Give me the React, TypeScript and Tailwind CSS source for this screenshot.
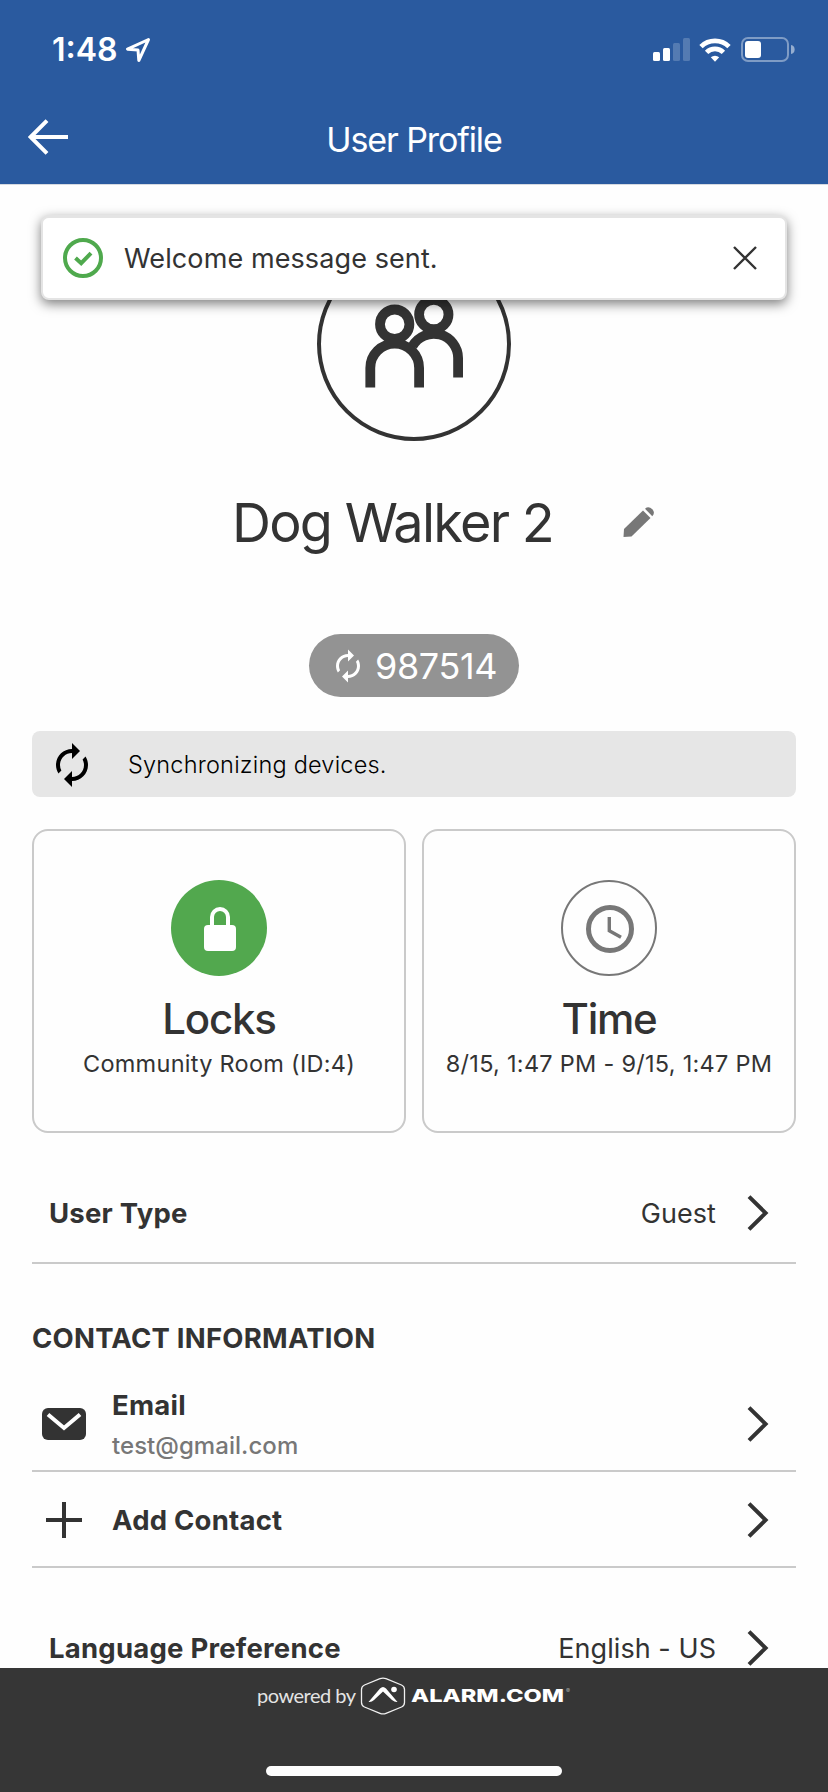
import type { ReactNode } from "react"
import { MdAutorenew } from "react-icons/md"

function StatusBar() {
  return (
    <div className="flex h-[99px] items-center pr-[33px] pl-[52px] text-white">
      <span className="text-[32px] leading-none font-semibold">1:48</span>
      <svg className="ml-[7px] h-[26px] w-[26px]" viewBox="0 0 26 26" fill="none" stroke="currentColor" strokeWidth="3" strokeLinejoin="round">
        <path d="M23.5 2.5 L2.5 12.2 L13 13 L13.8 23.5 Z" />
      </svg>
      <div className="ml-auto flex items-center">
        <svg className="h-6 w-[38px]" viewBox="0 0 38 24" fill="currentColor">
          <rect x="0" y="14" width="7" height="9" rx="1.5" />
          <rect x="10" y="10" width="7" height="13" rx="1.5" />
          <rect x="20" y="5" width="7" height="18" rx="1.5" opacity="0.2" />
          <rect x="30" y="0" width="7" height="23" rx="1.5" opacity="0.2" />
        </svg>
        <svg className="ml-2 h-6 w-8" viewBox="0 0 32 24" fill="none" stroke="currentColor" strokeWidth="4.8">
          <path d="M2 8.6 A20 20 0 0 1 30 8.6" />
          <path d="M7.6 14.4 A12 12 0 0 1 24.4 14.4" />
          <path d="M11.8 19.3 A6.2 6.2 0 0 1 20.2 19.3 L16 23.8 Z" fill="currentColor" stroke="none" />
        </svg>
        <svg className="ml-[10px] h-[25px] w-[54px]" viewBox="0 0 54 25" fill="none">
          <rect x="1" y="1" width="46" height="23" rx="6" stroke="#fff" strokeWidth="2" opacity="0.4" />
          <rect x="4" y="4" width="16" height="17" rx="3" fill="#fff" />
          <path d="M50 8 A4.6 4.6 0 0 1 50 17 Z" fill="#fff" opacity="0.5" />
        </svg>
      </div>
    </div>
  )
}

function Header() {
  return (
    <header className="h-[185px] border-b border-[#d5d9e0] bg-[#2a5a9f]">
      <StatusBar />
      <div className="grid h-[82px] grid-cols-[1fr_auto_1fr] items-center text-white">
        <svg className="mb-[6px] ml-[27px] h-9 w-[42px]" viewBox="0 0 42 36" fill="none" stroke="currentColor" strokeWidth="4">
          <path d="M20 1.6 L3.6 18 L20 34.4 M4 18 H41" />
        </svg>
        <h1 className="text-[34px] leading-none font-normal tracking-[-1.1px]">User Profile</h1>
      </div>
    </header>
  )
}

function Toast() {
  return (
    <div className="absolute top-[215px] left-[41px] flex h-[85px] w-[746px] items-center rounded-lg border-2 border-t-3 border-[#e4e4e4] bg-white pr-[28px] pl-5 shadow-[0_4px_12px_rgba(0,0,0,0.5)]">
      <svg className="h-10 w-10" viewBox="0 0 40 40" fill="none" stroke="#4fa94d" strokeWidth="4">
        <circle cx="20" cy="20" r="18" />
        <path d="M12.5 20 L18.2 25.2 L28 15.2" />
      </svg>
      <span className="ml-[21px] text-[27px] leading-none tracking-[0.1px]">Welcome message sent.</span>
      <svg className="ml-auto h-6 w-6" viewBox="0 0 24 24" fill="none" stroke="currentColor" strokeWidth="2.4">
        <path d="M1 1 L23 23 M23 1 L1 23" />
      </svg>
    </div>
  )
}

function Avatar() {
  return (
    <svg className="h-[194px] w-[194px]" viewBox="317 247.5 194 194" fill="none" stroke="currentColor">
      <circle cx="414" cy="344.5" r="95" strokeWidth="4" />
      <g strokeWidth="9.8">
        <circle cx="394.7" cy="324.7" r="14.7" />
        <circle cx="433.8" cy="315" r="14.7" />
        <path d="M370.3 388 V368.5 A24.4 24.4 0 0 1 419.1 368.5 V388" />
        <path d="M412.5 346.6 A24.4 24.4 0 0 1 458.1 358.6 V378" />
      </g>
    </svg>
  )
}

function Chevron() {
  return (
    <svg className="h-9 w-[22px]" viewBox="0 0 22 36" fill="none" stroke="currentColor" strokeWidth="4">
      <path d="M2 1.6 L18.6 18 L2 34.4" />
    </svg>
  )
}

interface CardProps {
  icon: ReactNode
  title: string
  detail: string
}

function Card({ icon, title, detail }: CardProps) {
  return (
    <div className="flex h-[304px] flex-col items-center rounded-2xl border-2 border-[#cacaca] pt-[49px]">
      {icon}
      <h3 className="mt-[22px] text-[42px] leading-none font-medium tracking-[-1.2px]">{title}</h3>
      <p className="mt-3 text-[23.5px] leading-none tracking-[0.27px] whitespace-nowrap">{detail}</p>
    </div>
  )
}

interface RowProps {
  label: string
  value: string
}

function Row({ label, value }: RowProps) {
  return (
    <div className="flex h-[98px] items-center pr-[27px] pl-[17px]">
      <span className="pt-[2px] text-[27.5px] leading-none font-bold tracking-[0.23px]">{label}</span>
      <span className="mr-[31px] ml-auto text-[27px] leading-none tracking-[0.05px]">{value}</span>
      <Chevron />
    </div>
  )
}

function Footer() {
  return (
    <footer className="absolute inset-x-0 bottom-0 h-[124px] bg-[#363636] text-white">
      <div className="flex h-14 items-center pl-[257px]">
        <span className="mb-[2px] w-[98px] font-[Lato] text-[20px] leading-none tracking-[-0.5px] whitespace-nowrap text-[#e4e4e4]">powered by</span>
        <svg className="ml-[5px] h-[38px] w-[46px]" viewBox="0 0 46 38" fill="none">
          <path d="M20 1.7 Q23 0.5 26 1.7 L41.5 8 Q44.5 9.4 44.5 12.5 V25.5 Q44.5 28.6 41.5 30 L26 36.3 Q23 37.5 20 36.3 L4.5 30 Q1.5 28.6 1.5 25.5 V12.5 Q1.5 9.4 4.5 8 Z" stroke="#f0f0f0" strokeWidth="1.3" />
          <path d="M8.5 25 L20 11.5 Q23 8.5 26 11.5 L37.5 25 Q35 25.5 32 23 L23 14.5 L14 23 Q11.5 25.5 8.5 25 Z" fill="#fff" />
          <circle cx="34" cy="12.5" r="2.8" fill="#fff" />
        </svg>
        <span className="ml-[5px] w-[155px] origin-left scale-x-[1.35] text-[17.5px] leading-none font-extrabold whitespace-nowrap">ALARM.COM</span>
        <span className="mb-2.5 text-[6px] leading-none text-[#aaaaaa]">®</span>
      </div>
      <div className="mx-auto mt-[42px] h-[10px] w-[296px] rounded-full bg-[#fdfdfd]" />
    </footer>
  )
}

export default function App() {
  return (
    <div className="relative h-[1792px] w-[828px] overflow-hidden bg-[#fefefe] font-[Inter,sans-serif] text-[#333333]">
      <Header />

      <main className="px-8 pt-[62px]">
        <div className="flex justify-center">
          <Avatar />
        </div>

        <div className="mt-[55px] flex h-[54px] items-center pl-[200px]">
          <h2 className="w-[391px] text-[54px] leading-none font-normal tracking-[-1.75px] whitespace-nowrap">Dog Walker 2</h2>
          <svg className="mb-[2px] h-8 w-8 text-[#777777]" viewBox="0 0 32 32" fill="currentColor">
            <path d="M0.5 31 L1 23 L20 4.5 L27.5 12 L8.5 30.5 Z" />
            <path d="M22 2.7 Q25.5 -0.3 29.3 3.2 Q32.5 6.8 29.3 10.2 Z" />
          </svg>
        </div>

        <div className="mx-auto mt-[84px] flex h-[63px] w-[210px] items-center rounded-full bg-[#939393] pl-[21px] text-white">
          <MdAutorenew size={36} />
          <span className="ml-[9px] text-[36px] leading-none font-normal tracking-[-0.4px]">987514</span>
        </div>

        <div className="mt-[34px] flex h-[66px] items-center rounded-lg bg-[#e6e6e6] pt-[2px] pl-4 text-black">
          <MdAutorenew size={48} />
          <span className="ml-[32px] text-[23.5px] leading-none font-light tracking-[0.2px]">Synchronizing devices.</span>
        </div>

        <div className="mt-8 grid grid-cols-2 gap-4">
          <Card
            icon={
              <svg className="h-24 w-24" viewBox="0 0 96 96" fill="none">
                <circle cx="48" cy="48" r="48" fill="#52a84e" />
                <rect x="33" y="45" width="32" height="26" rx="4" fill="#fff" />
                <path d="M41 46 V37 A8 8 0 0 1 57 37 V46" stroke="#fff" strokeWidth="4" />
              </svg>
            }
            title="Locks"
            detail="Community Room (ID:4)"
          />
          <Card
            icon={
              <svg className="h-24 w-24" viewBox="0 0 96 96" fill="none" stroke="#777777">
                <circle cx="48" cy="48" r="47" strokeWidth="2" />
                <circle cx="49" cy="49" r="21.5" strokeWidth="5" />
                <path d="M48.3 37 V50.8 L60 57.3" strokeWidth="3.4" />
              </svg>
            }
            title="Time"
            detail="8/15, 1:47 PM - 9/15, 1:47 PM"
          />
        </div>

        <div className="mt-[31px] border-b-2 border-[#cacaca]">
          <Row label="User Type" value="Guest" />
        </div>

        <h4 className="mt-[61px] h-7 text-[27.5px] leading-none font-bold tracking-[0.23px]">CONTACT INFORMATION</h4>

        <div className="mt-[19px] flex h-[100px] items-center border-b-2 border-[#cacaca] pt-[6px] pr-[27px] pl-[10px]">
          <svg className="h-8 w-11" viewBox="0 0 44 32" fill="none">
            <rect width="44" height="32" rx="6" fill="currentColor" />
            <path d="M6 6.5 L22 20 L38 6.5" stroke="#fff" strokeWidth="4" />
          </svg>
          <div className="ml-[26px] pt-[2px]">
            <p className="text-[27.5px] leading-none font-bold tracking-[0.23px]">Email</p>
            <p className="mt-[15px] text-[24px] leading-none font-medium tracking-[0.05px] text-[#777777]">test@gmail.com</p>
          </div>
          <div className="ml-auto flex">
            <Chevron />
          </div>
        </div>

        <div className="flex h-24 items-center border-b-2 border-[#cacaca] pt-[2px] pr-[27px] pl-[14px]">
          <svg className="h-9 w-9" viewBox="0 0 36 36" stroke="currentColor" strokeWidth="4">
            <path d="M18 0 V36 M0 18 H36" />
          </svg>
          <span className="ml-[30px] pt-[2px] text-[27.5px] leading-none font-bold tracking-[0.23px]">Add Contact</span>
          <div className="ml-auto flex">
            <Chevron />
          </div>
        </div>

        <div className="mt-[31px]">
          <Row label="Language Preference" value="English - US" />
        </div>
      </main>

      <Toast />
      <Footer />
    </div>
  )
}
